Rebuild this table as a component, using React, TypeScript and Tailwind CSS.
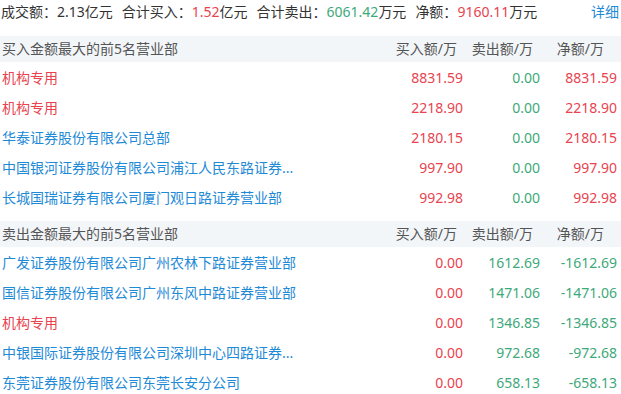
import React from 'react';

type Row = { name: string; buy: string; sell: string; net: string; inst?: boolean };

const buyRows: Row[] = [
  { name: '机构专用', buy: '8831.59', sell: '0.00', net: '8831.59', inst: true },
  { name: '机构专用', buy: '2218.90', sell: '0.00', net: '2218.90', inst: true },
  { name: '华泰证券股份有限公司总部', buy: '2180.15', sell: '0.00', net: '2180.15' },
  { name: '中国银河证券股份有限公司浦江人民东路证券...', buy: '997.90', sell: '0.00', net: '997.90' },
  { name: '长城国瑞证券有限公司厦门观日路证券营业部', buy: '992.98', sell: '0.00', net: '992.98' },
];

const sellRows: Row[] = [
  { name: '广发证券股份有限公司广州农林下路证券营业部', buy: '0.00', sell: '1612.69', net: '-1612.69' },
  { name: '国信证券股份有限公司广州东风中路证券营业部', buy: '0.00', sell: '1471.06', net: '-1471.06' },
  { name: '机构专用', buy: '0.00', sell: '1346.85', net: '-1346.85', inst: true },
  { name: '中银国际证券股份有限公司深圳中心四路证券...', buy: '0.00', sell: '972.68', net: '-972.68' },
  { name: '东莞证券股份有限公司东莞长安分公司', buy: '0.00', sell: '658.13', net: '-658.13' },
];

const RED = 'text-[#e8434f]';
const GREEN = 'text-[#3ea97a]';

function Section({ title, rows }: { title: string; rows: Row[] }) {
  return (
    <div>
      <div className="grid grid-cols-[1fr_77px_77px_77px] h-[26px] items-center bg-[#f3f6f9] text-[#555] pl-[2px] pr-[4px]">
        <span>{title}</span>
        <span className="text-right pr-[6px]">买入额/万</span>
        <span className="text-right pr-[7px]">卖出额/万</span>
        <span className="text-right pr-[13px]">净额/万</span>
      </div>
      {rows.map((r, i) => (
        <div key={i} className="grid grid-cols-[1fr_77px_77px_77px] h-[30px] items-center pt-[1px] pl-[2px] pr-[4px]">
          <span className={`whitespace-nowrap overflow-hidden ${r.inst ? RED : 'text-[#1f8ad6]'}`}>{r.name}</span>
          <span className={`text-right ${RED}`}>{r.buy}</span>
          <span className={`text-right ${GREEN}`}>{r.sell}</span>
          <span className={`text-right ${r.net.startsWith('-') ? GREEN : RED}`}>{r.net}</span>
        </div>
      ))}
    </div>
  );
}

export default function App() {
  return (
    <div className="w-[621px] h-[394px] overflow-hidden bg-white text-[14px] leading-[20px] text-[#333] font-['Noto_Sans','Noto_Sans_CJK_SC',sans-serif]">
      <div className="flex h-[24px] items-center pl-[1px] pr-[2px]">
        <div className="flex gap-[9px] whitespace-nowrap">
          <span>成交额：2.13亿元</span>
          <span>
            合计买入：<span className={RED}>1.52</span>亿元
          </span>
          <span>
            合计卖出：<span className={GREEN}>6061.42</span>万元
          </span>
          <span>
            净额：<span className={RED}>9160.11</span>万元
          </span>
        </div>
        <span className="ml-auto text-[#1f8ad6]">详细</span>
      </div>
      <div className="mt-[12px]">
        <Section title="买入金额最大的前5名营业部" rows={buyRows} />
      </div>
      <div className="mt-[9px]">
        <Section title="卖出金额最大的前5名营业部" rows={sellRows} />
      </div>
    </div>
  );
}
